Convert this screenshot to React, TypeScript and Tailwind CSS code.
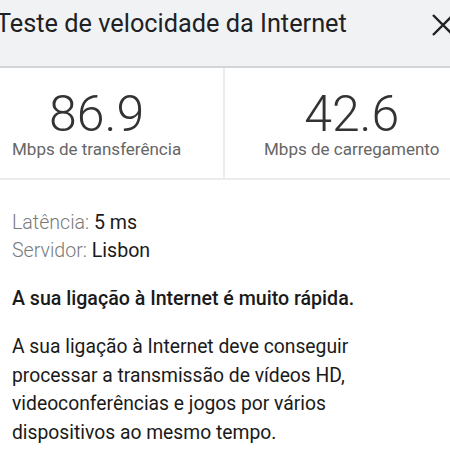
export default function App() {
  const stats = [
    { value: "86.9", label: "Mbps de transferência", pad: "pl-[12px]" },
    { value: "42.6", label: "Mbps de carregamento", pad: "pl-[39px]" },
  ];

  return (
    <div className="w-[450px] h-[450px] overflow-hidden bg-white font-['Roboto',sans-serif]">
      {/* header */}
      <div className="h-[68px] bg-[#f1f2f4] border-b-2 border-[#d4d5d7] flex items-start justify-between overflow-hidden">
        <h1 className="ml-[-4px] mt-[7px] text-[25.3px] leading-[34px] text-[#202124] whitespace-nowrap">
          Teste de velocidade da Internet
        </h1>
        <svg
          className="mt-[13px] mr-[-6px] shrink-0"
          width="26"
          height="24"
          viewBox="0 0 26 24"
          fill="none"
          stroke="#202124"
          strokeWidth="2.4"
        >
          <path d="M3 2 L23 22 M23 2 L3 22" />
        </svg>
      </div>

      {/* stats */}
      <div className="h-[112px] flex border-b-2 border-[#ececec]">
        {stats.map((s, i) => (
          <div
            key={s.value}
            className={`w-[225px] shrink-0 flex flex-col items-start pt-[21px] ${s.pad} ${
              i === 0 ? "border-r-2 border-[#ececec]" : ""
            }`}
          >
            <div className="w-fit flex flex-col items-center">
              <span className="text-[50px] leading-[50px] font-light text-[#333333]">
                {s.value}
              </span>
              <span className="text-[17px] leading-[20px] text-[#666666] whitespace-nowrap">
                {s.label}
              </span>
            </div>
          </div>
        ))}
      </div>

      {/* details */}
      <div className="px-[12px] pt-[29px]">
        <div className="text-[19.6px] leading-[28px]">
          <div>
            <span className="text-[#7a7a7a] font-light">Latência: </span>
            <span className="text-[#1a1a1a]">5 ms</span>
          </div>
          <div>
            <span className="text-[#7a7a7a] font-light">Servidor: </span>
            <span className="text-[#1a1a1a]">Lisbon</span>
          </div>
        </div>
        <p className="mt-[20px] text-[19.6px] leading-[28px] font-medium text-[#1a1a1a]">
          A sua ligação à Internet é muito rápida.
        </p>
        <p className="mt-[20px] max-w-[400px] text-[19.3px] leading-[28.5px] text-[#1a1a1a]">
          A sua ligação à Internet deve conseguir processar a transmissão de vídeos HD,
          videoconferências e jogos por vários dispositivos ao mesmo tempo.
        </p>
      </div>
    </div>
  );
}
